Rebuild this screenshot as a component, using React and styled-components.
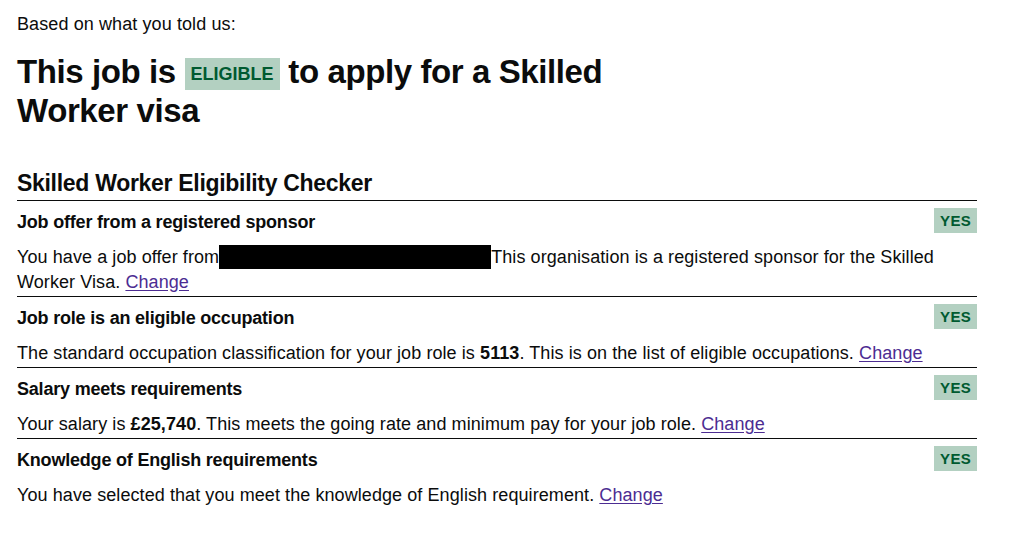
import React from "react";
import styled, { createGlobalStyle } from "styled-components";

const GlobalStyle = createGlobalStyle`
  body {
    margin: 0;
    background: #fff;
    color: #0b0c0c;
    font-family: "Liberation Sans", Arial, sans-serif;
  }
`;

// Page

const Page = styled.div`
  padding: 12px 17px 0;
  width: 960px;
`;
const Lead = styled.p`
  font-size: 18px;
  letter-spacing: 0.1px;
  line-height: 25px;
  margin: 0 0 15px;
`;
const Heading = styled.h1`
  font-size: 33px;
  font-weight: 700;
  letter-spacing: -0.4px;
  line-height: 39px;
  margin: 0 0 38px;
  max-width: 625px;
`;

// Tag

const Tag = styled.span`
  background: #b3d0c1;
  color: #005a30;
  display: inline-block;
  flex-shrink: 0;
  font-size: ${(p) => (p.$large ? "18px" : "15px")};
  font-weight: 700;
  letter-spacing: ${(p) => (p.$large ? "0" : "0.3px")};
  line-height: ${(p) => (p.$large ? "32px" : "25px")};
  margin-left: ${(p) => (p.$large ? "0" : "16px")};
  padding: 0 ${(p) => (p.$large ? "6px" : "6px")};
  text-transform: uppercase;
  vertical-align: ${(p) => (p.$large ? "3px" : "top")};
`;

// Checker

const Checker = styled.section``;
const CheckerTitle = styled.h2`
  border-bottom: 1px solid #0b0c0c;
  font-size: 23px;
  font-weight: 700;
  letter-spacing: -0.3px;
  line-height: 30px;
  margin: 0;
  padding-bottom: 2px;
`;
const Row = styled.div`
  padding: 7px 0 1px;

  & + & {
    border-top: 1px solid #0b0c0c;
  }
`;
const RowHeader = styled.div`
  align-items: flex-start;
  display: flex;
  justify-content: space-between;
`;
const RowTitle = styled.h3`
  font-size: 18px;
  font-weight: 700;
  letter-spacing: -0.2px;
  line-height: 22px;
  margin: 3px 0 0;
`;
const RowText = styled.p`
  font-size: 18px;
  letter-spacing: 0.08px;
  line-height: 25px;
  margin: 12px 0 0;
`;
const Redacted = styled.span`
  background: #000;
  display: inline-block;
  height: 24px;
  vertical-align: -6px;
  width: 272px;
`;
const Link = styled.a`
  color: #4c2c92;
  text-decoration: underline;
  text-underline-offset: 2px;
`;

const rows = [
  {
    title: "Job offer from a registered sponsor",
    text: (
      <>
        You have a job offer from<Redacted />This organisation is a registered sponsor for the Skilled Worker
        Visa.{" "}
      </>
    ),
  },
  {
    title: "Job role is an eligible occupation",
    text: (
      <>
        The standard occupation classification for your job role is <b>5113</b>. This is on the list of eligible
        occupations.{" "}
      </>
    ),
  },
  {
    title: "Salary meets requirements",
    text: (
      <>
        Your salary is <b>£25,740</b>. This meets the going rate and minimum pay for your job role.{" "}
      </>
    ),
  },
  {
    title: "Knowledge of English requirements",
    text: <>You have selected that you meet the knowledge of English requirement. </>,
  },
];

const App = () => {
  return (
    <>
      <GlobalStyle />
      <Page>
        <Lead>Based on what you told us:</Lead>
        <Heading>
          This job is <Tag $large>Eligible</Tag> to apply for a Skilled Worker visa
        </Heading>

        <Checker>
          <CheckerTitle>Skilled Worker Eligibility Checker</CheckerTitle>
          {rows.map((row) => (
            <Row key={row.title}>
              <RowHeader>
                <RowTitle>{row.title}</RowTitle>
                <Tag>Yes</Tag>
              </RowHeader>
              <RowText>
                {row.text}
                <Link href="#">Change</Link>
              </RowText>
            </Row>
          ))}
        </Checker>
      </Page>
    </>
  );
};

export default App;
